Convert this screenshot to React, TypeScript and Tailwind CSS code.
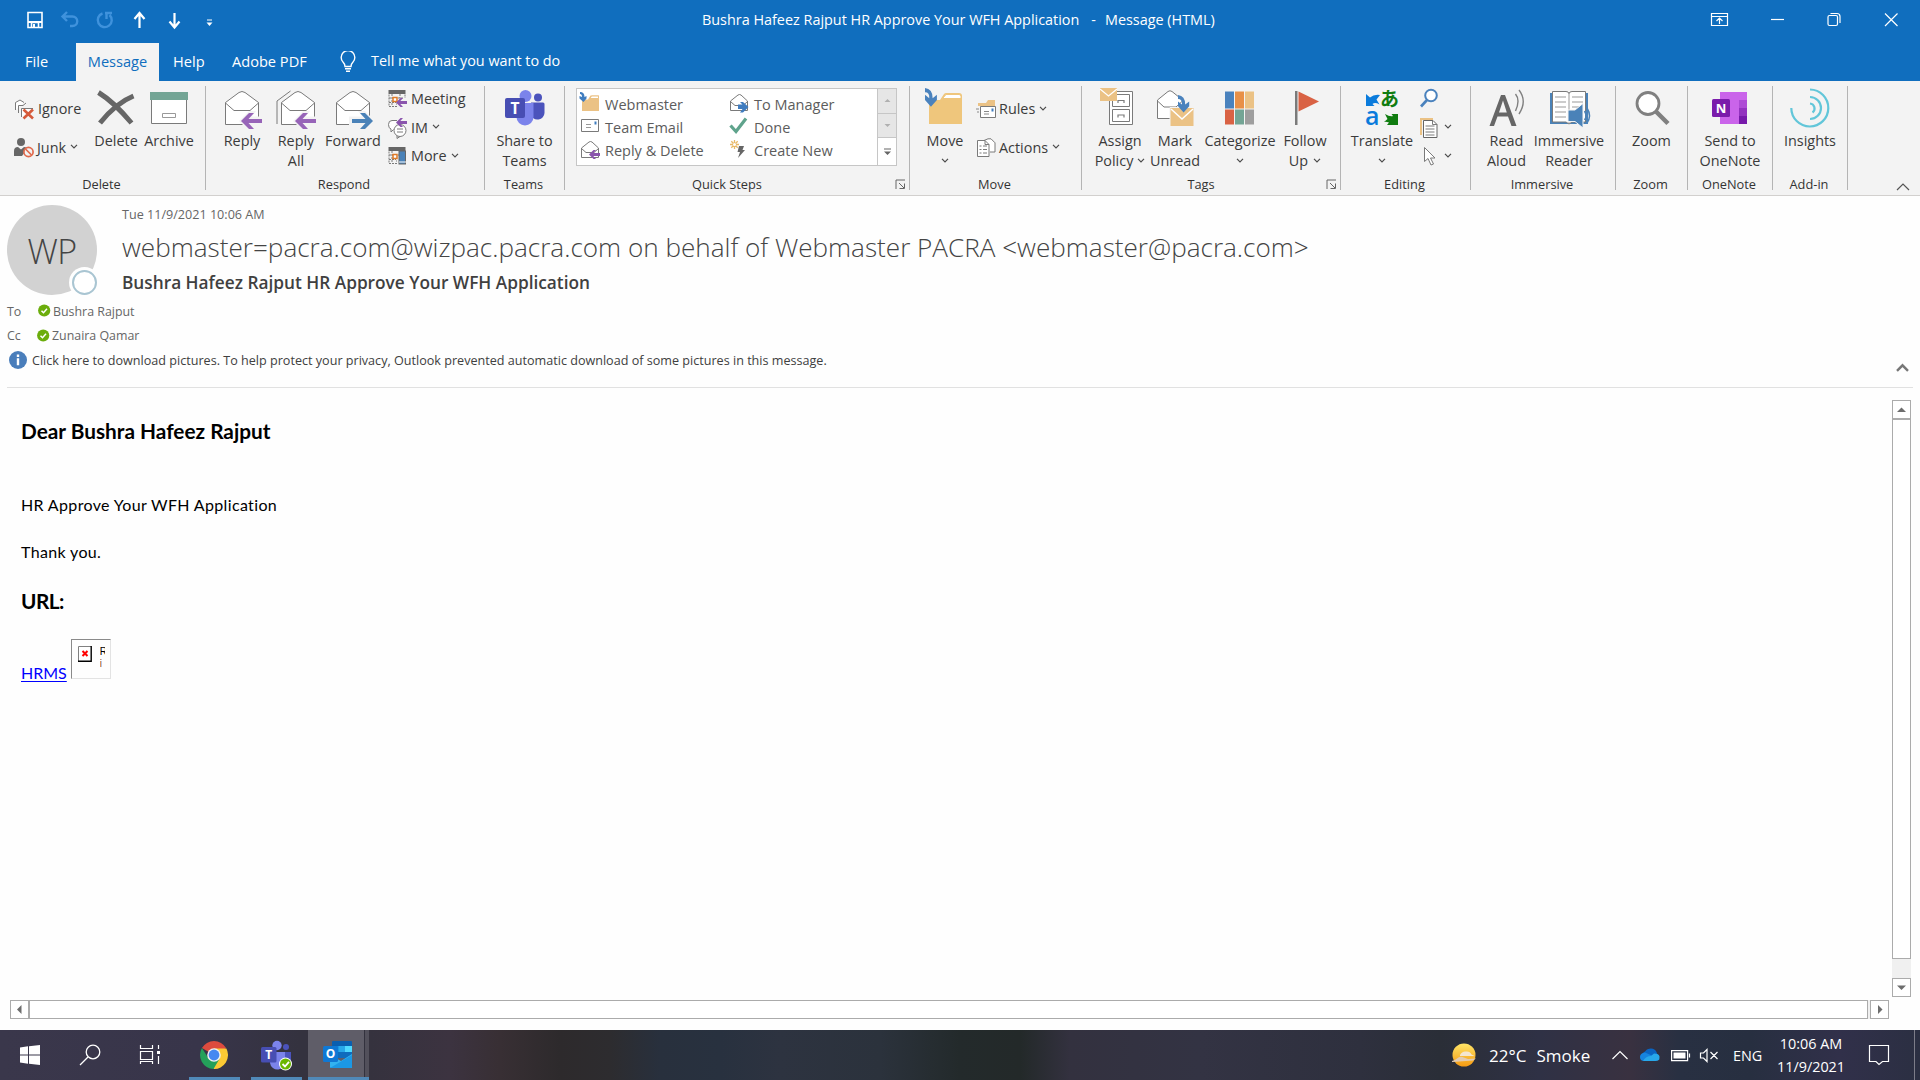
import type { ReactNode } from "react";

const G = "#7a7a7a";

/* ---------- shared pieces ---------- */

function Chevron({ className = "" }: { className?: string }) {
  return (
    <svg className={`-mt-[2px] inline-block shrink-0 ${className}`} width="8" height="5" viewBox="0 0 8 5" fill="none" stroke="#4a4a4a" strokeWidth="1.2">
      <path d="M1 0.8 4 3.8 7 0.8" />
    </svg>
  );
}

function Big({ w, icon, l1, l2 }: { w: string; icon: ReactNode; l1: ReactNode; l2?: ReactNode }) {
  return (
    <div className={`flex shrink-0 flex-col items-center pt-[7px] ${w}`}>
      <svg className="shrink-0 overflow-visible" width="40" height="43" viewBox="0 0 40 43" fill="none">
        {icon}
      </svg>
      <div className="whitespace-nowrap text-center text-[14.4px] leading-5">
        <div>{l1}</div>
        <div className="flex h-5 items-center justify-center">{l2}</div>
      </div>
    </div>
  );
}

function Small({ h, icon, text, chevron, gap = "gap-[5px]" }: { h: string; icon: ReactNode; text?: string; chevron?: boolean; gap?: string }) {
  return (
    <div className={`flex items-center whitespace-nowrap text-[14.4px] ${gap} ${h}`}>
      <svg className="shrink-0 overflow-visible" width="20" height="20" viewBox="0 0 20 20" fill="none">
        {icon}
      </svg>
      {text && <span>{text}</span>}
      {chevron && <Chevron className="ml-px" />}
    </div>
  );
}

function Group({ w, label, launcher, children }: { w: string; label: string; launcher?: boolean; children: ReactNode }) {
  return (
    <>
      <div className={`flex shrink-0 flex-col ${w}`}>
        <div className="flex h-[95px]">{children}</div>
        <div className="flex h-5 shrink-0 items-center">
          <span className={`flex-1 text-center text-[12.8px] text-[#333] ${launcher ? "pr-[6px]" : "pr-[2px]"}`}>{label}</span>
          {launcher && (
            <svg className="mb-[2px] mr-[3px] shrink-0" width="11" height="11" viewBox="0 0 11 11" fill="none" stroke="#666">
              <path d="M1 10V1h9M4 4l5 5M9.5 4.500V9.500H4.500" />
            </svg>
          )}
        </div>
      </div>
      <div className="my-[5px] w-px shrink-0 bg-[#b4b4b4]" />
    </>
  );
}

/* ---------- ribbon drawings ---------- */

const Envelope = () => (
  <>
    <path d="M3.500 14.500 17 4.500q3-2 6 0L36.500 14.500V36.500H3.500Z" fill="#fff" stroke={G} />
    <path d="M3.500 15 12 22.500H28L36.500 15" stroke={G} />
  </>
);

const LeftArrow = ({ x, y }: { x: number; y: number }) => (
  <g transform={`translate(${x} ${y})`}>
    <path d="M-2 8 8-2h7l-4 5.500h13v9H11l4 5.500H8Z" fill="#f3f3f3" />
    <path d="M0 8 8 0h5L7.500 6H21v4H7.500L13 16H8Z" fill="#9764b8" />
  </g>
);

const Calendar = () => (
  <>
    <path d="M.5 1h17v4H.5Z" fill="#666" />
    <path d="M1 5.500V17.500H9M17 5.500V9M4 5v12M8 15h1M12 5v4M1 9h14M1 13.500h7" stroke={G} strokeDasharray="2 1" />
    <path d="M5 8.500h4v4H5Z" fill="#fff" stroke="#e07b28" strokeWidth="1.500" />
  </>
);

const SmallLeftArrow = ({ x, y }: { x: number; y: number }) => (
  <path transform={`translate(${x} ${y})`} d="M0 4.500 4.500 0H7L4.300 3H11V6H4.300L7 9H4.500Z" fill="#8a55ad" />
);

const CurvedArrow = () => <path d="M0 0q9 1 9 12l5-4v6l-7 8-7-8V8l5 4Q5.500 5 0 5Z" fill="#4a82bd" />;

const Folder = () => (
  <>
    <path d="M5 13H16l4-6q1-1 2-1H35q3 0 3 3V37H5Z" fill="#efc67c" />
    <path d="M18.500 11.500 22 7.500H35q2 0 2 2v2Z" fill="#fff" stroke="#efc67c" />
  </>
);

const MiniEnvelope = () => (
  <path d="M1.500 8 9 2q1.500-1 3 0L18.500 8V17.500H1.500ZM1.500 8.500 6 12.500h8L18.500 8.500" fill="#fff" stroke={G} />
);

const TeamsLogo = () => (
  <>
    <circle cx="33" cy="9.500" r="4" fill="#4b53bc" />
    <path d="M26 14.500H38a1.500 1.500 0 0 1 1.500 1.500v9a7 7 0 0 1-13.500 2Z" fill="#4b53bc" />
    <circle cx="20.500" cy="8" r="6" fill="#7b83eb" />
    <path d="M12 15H28.500V29a8.500 8.500 0 0 1-17 0Z" fill="#7b83eb" />
    <rect x="0" y="10" width="20" height="20" rx="2" fill="#474eb3" />
    <text x="10" y="26" textAnchor="middle" fontFamily="Open Sans, sans-serif" fontWeight="700" fontSize="15.500" fill="#fff">T</text>
  </>
);

/* ---------- quick steps ---------- */

const quickSteps: { text: string; icon: ReactNode }[] = [
  {
    text: "Webmaster",
    icon: (
      <>
        <path d="M2 6.500H8l2.500-4H19V18H2Z" fill="#ebc285" />
        <path d="M10 5.500 11.500 3H18.500V5.500Z" fill="#fff" stroke="#ebc285" />
        <path d="M0-1q4.500 0 4.500 5l2-1v2.500L3.500 9-.5 5.500V3l2.500 1Q2 1 0 1Z" fill="#3f7cbf" />
      </>
    ),
  },
  {
    text: "To Manager",
    icon: (
      <>
        <MiniEnvelope />
        <path d="M9 11.500h4.500L11 9h3l5.500 5-5.500 5.500h-3L13.500 16H9Z" fill="#3f7cbf" />
      </>
    ),
  },
  {
    text: "Team Email",
    icon: (
      <>
        <path d="M1.500 3.500h17v12h-17Z" fill="#fff" stroke={G} />
        <path d="M6 8.500h5M6 11.500h5" stroke="#999" />
        <path d="M14.500 5.500h2v3h-2Z" fill="#3f7cbf" />
      </>
    ),
  },
  { text: "Done", icon: <path d="M1.500 9.500 7 15.500 17 2.500" stroke="#5fa38c" strokeWidth="3.200" /> },
  {
    text: "Reply & Delete",
    icon: (
      <>
        <MiniEnvelope />
        <SmallLeftArrow x={9} y={10} />
      </>
    ),
  },
  {
    text: "Create New",
    icon: (
      <>
        <path d="M5.500 0v9M1 4.500h9M2.300 1.300l6.400 6.400M8.700 1.300 2.300 7.700" stroke="#e8b968" strokeWidth="1.300" />
        <circle cx="5.500" cy="4.500" r="1.500" fill="#fff" />
        <path d="M10 6h5l-1.500 4H16L9 18l2-6H8.500Z" fill="#666" />
      </>
    ),
  },
];

function ScrollCell({ className, children }: { className: string; children: ReactNode }) {
  return (
    <div className={`flex items-center justify-center ${className}`}>
      <svg width="9" height="9" viewBox="0 0 9 9">
        {children}
      </svg>
    </div>
  );
}

/* ---------- sections ---------- */

function TitleBar() {
  return (
    <div className="flex h-[43px] items-center text-white">
      <div className="flex w-[640px] shrink-0 items-center pb-[3px]">
        <svg width="220" height="24" viewBox="0 0 220 24" fill="none" stroke="#fff">
          <path d="M28 4.500H42V19.500H28ZM31.500 19v-4.500h7V19" strokeWidth="1.600" />
          <path d="M28 13h14v2H28Z" fill="#fff" stroke="none" />
          <path d="M33 16h2v4h-2Z" fill="#fff" stroke="none" />
          <g stroke="#3f92dc" strokeWidth="2.400">
            <path d="M67 4l-4.500 4.500L67 13M63 8.500h9.500a4.700 4.700 0 0 1 0 9.500H70" />
            <path d="M102.500 5.500a7 7 0 1 0 7 1.500M105 5h7M106.500 5v6" />
          </g>
          <path d="M139.500 20V6M134.500 11l5-6 5 6" strokeWidth="2.200" />
          <path d="M174.500 5v14M169.500 13.500l5 6 5-6" strokeWidth="2.200" />
          <path d="M207 12h5" />
          <path d="M206.500 14.500h6l-3 3.500Z" fill="#fff" stroke="none" />
        </svg>
      </div>
      <div className="flex flex-1 whitespace-pre pb-[3px] pl-[62px] text-[14.4px]">
        <span>Bushra Hafeez Rajput HR Approve Your WFH Application</span>
        <span className="ml-[12px]">-</span>
        <span className="ml-[9px]">Message (HTML)</span>
      </div>
      <svg className="mb-[5px] shrink-0" width="210" height="20" viewBox="0 0 210 20" fill="none" stroke="#fff" strokeWidth="1.200">
        <path d="M1.500 4.500h16v12h-16ZM1.500 7.500h16M9.500 15V9.500M6.500 12l3-3 3 3" />
        <path d="M61 10.500h13" />
        <rect x="118" y="6.500" width="9.500" height="10" rx="1.500" />
        <path d="M120.500 4.500h6.500q3 0 3 3v6.500" />
        <path d="M175 4.500 187.500 17M187.500 4.500 175 17" />
      </svg>
    </div>
  );
}

function TabBar() {
  return (
    <div className="flex h-[38px] items-center text-[14.600px] leading-[22px] text-white">
      <div className="w-[76px] pb-[2px] pl-[25px]">File</div>
      <div className="flex h-full w-[83px] items-center justify-center bg-[#f3f3f3] pb-[2px] text-[#106ebe]">Message</div>
      <div className="w-[73px] pb-[2px] pl-[14px]">Help</div>
      <div className="w-[108px] whitespace-nowrap pb-[2px]">Adobe PDF</div>
      <svg className="shrink-0" width="16" height="22" viewBox="0 0 16 22" fill="none" stroke="#fff" strokeWidth="1.400">
        <path d="M5 15.500q0-2.500-2-4.500a6.800 6.800 0 1 1 10 0q-2 2-2 4.500ZM5 17.800h6M6 20.200h4" />
      </svg>
      <div className="ml-[15px] whitespace-nowrap pb-[2px] text-[14.400px]">Tell me what you want to do</div>
    </div>
  );
}

function Ribbon() {
  return (
    <div className="flex h-[115px] border-b border-[#d2d0ce] bg-[#f3f3f3] text-[#3b3b3b]">
      <Group w="w-[205px]" label="Delete">
        <div className="ml-[14px] w-[76px] pt-[9px]">
          <Small
            h="h-[38.500px]"
            gap="gap-[4px]"
            icon={
              <>
                <path d="M1.500 11V3.500L6 1l4 2.500" stroke={G} fill="#fff" />
                <path d="M4.500 14V6.500H9l3-2.500" stroke={G} />
                <path d="M7.500 18V9.500H19" stroke={G} fill="#fff" />
                <path d="M9.500 10.500 19 19.500M19 10.500 9.500 19.500" stroke="#d65a3a" strokeWidth="2.600" />
              </>
            }
            text="Ignore"
          />
          <Small
            h="h-[38.500px]"
            icon={
              <>
                <circle cx="7" cy="4" r="4" fill="#666" />
                <path d="M0 18v-5q0-4 4-4l3 2.500L10 9q3 0 3 2l-5 7Z" fill="#666" />
                <circle cx="14.500" cy="14" r="4.600" stroke="#e0694c" strokeWidth="1.700" fill="#f3f3f3" />
                <path d="M11.500 11l6 6" stroke="#e0694c" strokeWidth="1.700" />
              </>
            }
            text="Junk"
            chevron
            gap="gap-[3px]"
          />
        </div>
        <Big w="w-[52px]" icon={<path d="M2.500 4.500Q18 14 35.500 35M37.500 8Q20 15 4 35" stroke="#666" strokeWidth="5" />} l1="Delete" />
        <Big
          w="w-[54px]"
          icon={
            <>
              <path d="M2.500 8V35.500H37.500V8" fill="#fff" stroke={G} />
              <path d="M1 4h38v8H1Z" fill="#73a595" />
              <path d="M13.500 25.500h13v4h-13Z" stroke="#999" />
            </>
          }
          l1="Archive"
        />
      </Group>

      <Group w="w-[278px]" label="Respond">
        <Big w="ml-[9px] w-[54px]" icon={<><Envelope /><LeftArrow x={19} y={25} /></>} l1="Reply" />
        <Big
          w="w-[54px]"
          icon={
            <>
              <path d="M1 36V13L14.500 3" stroke={G} />
              <g transform="translate(2 0)">
                <Envelope />
              </g>
              <LeftArrow x={19} y={25} />
            </>
          }
          l1="Reply"
          l2="All"
        />
        <Big
          w="w-[60px]"
          icon={
            <>
              <Envelope />
              <g transform="translate(40 25) scale(-1 1)">
                <path d="M-2 8 8-2h7l-4 5.500h13v9H11l4 5.500H8Z" fill="#f3f3f3" />
                <path d="M0 8 8 0h5L7.500 6H21v4H7.500L13 16H8Z" fill="#4a82b8" />
              </g>
            </>
          }
          l1="Forward"
        />
        <div className="ml-[5px] pt-[4px]">
          <Small h="h-[28.500px]" gap="gap-[3px]" icon={<><Calendar /><SmallLeftArrow x={8} y={9} /></>} text="Meeting" />
          <Small
            h="h-[28.500px]"
            gap="gap-[3px]"
            icon={
              <>
                <path d="M9 2.500H4q-3.500 0-3.500 4T3 11v3l2.500-2.500" stroke={G} fill="#fff" />
                <circle cx="12" cy="12.500" r="6" stroke={G} fill="#fff" />
                <path d="M9 11h6M9 14h6M9 17.500v3L12 18.500" stroke={G} />
                <SmallLeftArrow x={8} y={0} />
              </>
            }
            text="IM"
            chevron
          />
          <Small
            h="h-[28.500px]"
            gap="gap-[3px]"
            icon={
              <>
                <Calendar />
                <rect x="11" y="5" width="6.500" height="13" fill="#4a82b8" stroke="#666" />
                <path d="M11 16h7" stroke="#fff" />
              </>
            }
            text="More"
            chevron
          />
        </div>
      </Group>

      <Group w="w-[79px]" label="Teams">
        <Big w="w-full" icon={<TeamsLogo />} l1="Share to" l2="Teams" />
      </Group>

      <Group w="w-[344px]" label="Quick Steps" launcher>
        <div className="ml-[11px] mt-[7px] flex h-[78px] w-[321px] border border-[#c6c6c6] bg-white">
          <div className="grid flex-1 grid-cols-[149px_1fr] grid-rows-3 pb-[2px] pl-[3px] pt-[4px]">
            {quickSteps.map((q) => (
              <div key={q.text} className="flex items-center gap-[5px] whitespace-nowrap text-[14.5px] text-[#5c5c5c]">
                <svg className="-mt-[3px] shrink-0 overflow-visible" width="20" height="20" viewBox="0 0 20 20" fill="none">
                  {q.icon}
                </svg>
                {q.text}
              </div>
            ))}
          </div>
          <div className="grid w-[19px] grid-rows-[1fr_1fr_1.1fr] border-l border-[#c6c6c6]">
            <ScrollCell className="border-b border-[#c6c6c6] bg-[#e6e6e6]">
              <path d="M1.500 6h6l-3-3Z" fill="#b0b0b0" />
            </ScrollCell>
            <ScrollCell className="border-b border-[#c6c6c6] bg-[#e6e6e6]">
              <path d="M1.500 3h6l-3 3Z" fill="#b0b0b0" />
            </ScrollCell>
            <ScrollCell className="bg-white">
              <path d="M1 1.500h7v1H1ZM1 4.500h7L4.500 8Z" fill="#666" />
            </ScrollCell>
          </div>
        </div>
      </Group>

      <Group w="w-[171px]" label="Move">
        <Big
          w="ml-1 w-[62px]"
          icon={
            <>
              <g transform="translate(-1 -1)">
                <Folder />
              </g>
              <g transform="scale(.85)">
                <CurvedArrow />
              </g>
            </>
          }
          l1="Move"
          l2={<Chevron />}
        />
        <div className="pt-[9px]">
          <Small
            h="h-[38.500px]"
            gap="gap-[3px]"
            icon={
              <>
                <path d="M2 8V4h8l2-3h7v6H2" fill="#ebc285" />
                <path d="M4.500 7.500h15v11h-15Z" fill="#fff" stroke={G} />
                <path d="M8 12.500h5M8 15h5M0 10h3M1 13h2" stroke="#888" />
                <path d="M15.500 9.500h2v3h-2Z" fill="#3f7cbf" />
              </>
            }
            text="Rules"
            chevron
          />
          <Small
            h="h-[38.500px]"
            gap="gap-[3px]"
            icon={
              <>
                <path d="M8 2.500 12 .8h3l4 4V14h-5" fill="#fff" stroke={G} />
                <path d="M1.500 2.500H9l4 4V18.500H1.500Z" fill="#fff" stroke={G} />
                <path d="M9 2.500v4h4M3.500 8h2M7 8h4M3.500 11.500h2M7 11.500h4M3.500 15h2M7 15h4" stroke={G} />
              </>
            }
            text="Actions"
            chevron
          />
        </div>
      </Group>

      <Group w="w-[258px]" label="Tags" launcher>
        <Big
          w="ml-[11px] w-[54px]"
          icon={
            <>
              <path d="M9.500 3.500h23v33h-23Z" fill="#fff" stroke={G} />
              <path d="M12.500 6.500h17v12h-17ZM12.500 21.500h17v12h-17Z" stroke={G} />
              <path d="M18 15v-2.500h6V15M18 29.500V27h6v2.500" stroke={G} strokeWidth="1.200" />
              <path d="M0 0h17v13H0Z" fill="#ebc285" />
              <path d="M0 1 8.500 8 17 1" stroke="#fff" strokeWidth="1.200" />
            </>
          }
          l1="Assign"
          l2={<>Policy<Chevron className="ml-[4px]" /></>}
        />
        <Big
          w="w-[56px]"
          icon={
            <>
              <path d="M2.500 12 13 3.500q2-1.500 4 0L27.500 12V30.500H2.500Z" fill="#fff" stroke={G} />
              <path d="M2.500 13 9 19h12l6.500-6" stroke={G} />
              <path d="M15 19.500h24v19H15Z" fill="#ebc285" stroke="#f3f3f3" />
              <path d="M16 21 27 31 38 21" stroke="#fff" strokeWidth="1.500" />
              <g transform="translate(23 7) scale(.8)">
                <CurvedArrow />
              </g>
            </>
          }
          l1="Mark"
          l2="Unread"
        />
        <Big
          w="w-[74px]"
          icon={
            <>
              <path d="M5 3.500h9v17H5Z" fill="#4a82bd" />
              <path d="M15 3.500h9v17H15Z" fill="#e89047" />
              <path d="M25 3.500h9v17H25Z" fill="#ebc285" />
              <path d="M5 21.500h9v15H5Z" fill="#d96244" />
              <path d="M15 21.500h9v15H15Z" fill="#73a595" />
              <path d="M25 21.500h9v15H25Z" fill="#9e9e9e" />
            </>
          }
          l1="Categorize"
          l2={<Chevron />}
        />
        <Big
          w="w-[56px]"
          icon={
            <>
              <path d="M10 3h2.500v34H10Z" fill={G} />
              <path d="M13.500 3.500 34 13.500l-20.500 10Z" fill="#d96244" />
            </>
          }
          l1="Follow"
          l2={<>Up<Chevron className="ml-[5px]" /></>}
        />
      </Group>

      <Group w="w-[129px]" label="Editing">
        <Big
          w="ml-[9px] w-[64px]"
          icon={
            <>
              <path d="M4 6l4 3.500Q12 6 18 7l-3.500 4.500 3 5Q13 14 10.500 16l2 2H4Z" fill="#0a7bdc" />
              <text x="18" y="18" fontFamily="Noto Sans CJK JP, sans-serif" fontWeight="700" fontSize="19" fill="#107c10">あ</text>
              <text x="3" y="37" fontFamily="Open Sans, sans-serif" fontWeight="600" fontSize="25" fill="#0a7bdc">a</text>
              <path d="M36 26v11h-11l2-2.500q-3-1-5-.5l3.500-3-2.500-5q5 3 8 2l-1.500-2Z" fill="#107c10" />
            </>
          }
          l1="Translate"
          l2={<Chevron />}
        />
        <div className="ml-[6px] pt-[4px]">
          <Small
            h="h-[28.500px]"
            icon={
              <>
                <circle cx="11" cy="6.500" r="5.800" fill="#fff" stroke="#4a82bd" strokeWidth="2" />
                <path d="M7 11 1 17.500" stroke="#4a82bd" strokeWidth="2.600" />
              </>
            }
          />
          <Small
            h="h-[28.500px]"
            gap="gap-[3px]"
            icon={
              <>
                <path d="M1 17V1h12" stroke="#ebc285" strokeWidth="2" />
                <path d="M3.500 2.500H13l4 4V19.500H3.500Z" fill="#fff" stroke="#666" />
                <path d="M12.500 2.500v4H17M5.500 8h9M5.500 11h9M5.500 14h9M5.500 17h9" stroke={G} />
              </>
            }
            chevron
          />
          <Small
            h="h-[28.500px]"
            gap="gap-[3px]"
            icon={<path d="M4.500 1.500v14l3.500-3 3 6.500 2.500-1-3-6H15Z" fill="#fff" stroke={G} />}
            chevron
          />
        </div>
      </Group>

      <Group w="w-[144px]" label="Immersive">
        <Big
          w="ml-[9px] w-[53px]"
          icon={
            <>
              <path d="M2.500 38 14 7h4l11.500 31h-5L21 28.500H10.500L7 38ZM12 24.500h7.800L16 12.500Z" fill="#666" fillRule="evenodd" />
              <path d="M28.500 6q5 6 0 17M32 2q8.500 11 0 24" stroke="#808080" strokeWidth="1.400" />
            </>
          }
          l1="Read"
          l2="Aloud"
        />
        <Big
          w="w-[72px]"
          icon={
            <>
              <path d="M1 5h38v31H1Z" fill="#4a82b8" />
              <path d="M3.500 3.500H17q2.500 0 3 2 .5-2 3-2H36.500V34H23l-3 2-3-2H3.500Z" fill="#fff" stroke={G} />
              <path d="M20 5v30M6 9h11M6 14h11M6 19h11M6 24h11M6 29h11M23 9h11M23 14h11M23 19h9" stroke="#999" />
              <path d="M19 22h7l8-6.500V40l-8-6.500h-7Z" fill="#4a82b8" stroke="#f3f3f3" />
              <path d="M35.500 23q3 5 0 9M38 20q5 8 0 15" stroke="#4a82b8" strokeWidth="1.500" />
            </>
          }
          l1="Immersive"
          l2="Reader"
        />
      </Group>

      <Group w="w-[71px]" label="Zoom">
        <Big
          w="w-full"
          icon={
            <>
              <circle cx="16" cy="15.500" r="11" fill="#fff" stroke="#808080" strokeWidth="2.800" />
              <path d="M24 23.500 36 35.500" stroke="#808080" strokeWidth="4.500" />
            </>
          }
          l1="Zoom"
        />
      </Group>

      <Group w="w-[84px]" label="OneNote">
        <Big
          w="w-full"
          icon={
            <>
              <path d="M10 4H37V36H10Z" fill="#ca64ea" />
              <path d="M29 12h8v8h-8Z" fill="#ae4bd5" />
              <path d="M29 20h8v8h-8Z" fill="#9332bf" />
              <path d="M29 28h8v8h-8Z" fill="#7719aa" />
              <rect x="2" y="11" width="18" height="18" rx="1.500" fill="#7a1cab" />
              <text x="11" y="25" textAnchor="middle" fontFamily="Open Sans, sans-serif" fontWeight="700" fontSize="13" fill="#fff">N</text>
            </>
          }
          l1="Send to"
          l2="OneNote"
        />
      </Group>

      <Group w="w-[74px]" label="Add-in">
        <Big
          w="w-full"
          icon={<path d="M20 1.500a18.500 18.500 0 1 1-18.700 18.500M20 9a11 11 0 1 1 0 22M20 15.500a5 5 0 0 1 2.500 9" stroke="#62c6d9" strokeWidth="2.200" />}
          l1="Insights"
        />
      </Group>

      <div className="flex flex-1 items-end justify-end pb-1 pr-[10px]">
        <svg width="14" height="8" viewBox="0 0 14 8" fill="none" stroke="#555" strokeWidth="1.200">
          <path d="M1 7 7 1l6 6" />
        </svg>
      </div>
    </div>
  );
}

function Presence() {
  return (
    <svg className="mb-[3px] shrink-0" width="13" height="13" viewBox="0 0 13 13" fill="none">
      <circle cx="6.200" cy="6.500" r="6.100" fill="#6bad0c" />
      <path d="M3.500 6.700 5.500 8.700 9 4.800" stroke="#fff" strokeWidth="1.500" />
    </svg>
  );
}

function MessageHeader() {
  return (
    <div className="h-[192px] px-[7px] pt-[9px] text-[12.600px]">
      <div className="h-full border-b border-[#e1e1e1]">
        <div className="flex h-[95px]">
          <div className="relative flex size-[90px] items-center justify-center rounded-full bg-[#d2d2d2] text-[34px] font-light text-[#444]">
            <span className="mt-[3px] tracking-[-0.500px]">WP</span>
            <span className="absolute -bottom-[3px] -right-[3px] size-[31px] rounded-full bg-[#fefefe] p-[3px]">
              <span className="block size-full rounded-full border-2 border-[#a9c5d2] bg-white" />
            </span>
          </div>
          <div className="ml-[25px] whitespace-nowrap">
            <div className="h-[24px] leading-[19px] text-[#666]">Tue 11/9/2021 10:06 AM</div>
            <div className="h-[42px] text-[26.100px] font-light leading-9 text-[#444]">
              webmaster=pacra.com@wizpac.pacra.com on behalf of Webmaster PACRA &lt;webmaster@pacra.com&gt;
            </div>
            <div className="text-[17.250px] font-semibold leading-6 text-[#404040]">Bushra Hafeez Rajput HR Approve Your WFH Application</div>
          </div>
        </div>
        <div className="flex h-6 items-center text-[12.400px] text-[#666]">
          <span className="w-[31px]">To</span>
          <Presence />
          <span className="ml-[2px]">Bushra Rajput</span>
        </div>
        <div className="flex h-[25px] items-center text-[12.400px] text-[#666]">
          <span className="w-[30px]">Cc</span>
          <Presence />
          <span className="ml-[2px]">Zunaira Qamar</span>
        </div>
        <div className="flex h-6 items-center text-[#404040]">
          <svg className="mb-[2px] ml-[2px] shrink-0" width="18" height="18" viewBox="0 0 18 18">
            <circle cx="9" cy="9" r="9" fill="#4a7ebb" />
            <path d="M7.800 3.500h2.400v2.400H7.800ZM7.800 7.300h2.400v7H7.800Z" fill="#fff" />
          </svg>
          <span className="ml-[5px] whitespace-nowrap">
            Click here to download pictures. To help protect your privacy, Outlook prevented automatic download of some pictures in this message.
          </span>
          <svg className="ml-auto mr-1 mt-[12px] shrink-0" width="13" height="9" viewBox="0 0 13 9" fill="none" stroke="#777" strokeWidth="2.400">
            <path d="M1 7.800 6.500 2.300 12 7.800" />
          </svg>
        </div>
      </div>
    </div>
  );
}

function Arrow({ d }: { d: string }) {
  return (
    <svg width="9" height="9" viewBox="0 0 9 9" fill="#6d6d6d">
      <path d={d} />
    </svg>
  );
}

function MessageBody() {
  return (
    <div className="flex h-[612px]">
      <div className="flex-1 pl-[21px] pt-[28px] font-[Lato,sans-serif] text-[16px] text-black">
        <h2 className="h-[75px] text-[20.800px] font-bold leading-[30px]">Dear Bushra Hafeez Rajput</h2>
        <p className="h-[47px] leading-[28px] tracking-[0.350px]">HR Approve Your WFH Application</p>
        <p className="h-[47px] leading-[28px] tracking-[0.350px]">Thank you.</p>
        <h2 className="h-[54px] text-[20.800px] font-bold leading-[32px] tracking-[-0.500px]">URL:</h2>
        <div className="flex">
          <span className="mt-[20px] leading-[28px] text-[#0000ff] underline underline-offset-2">HRMS</span>
          <div className="ml-[4px] flex size-10 gap-2 border border-b-[#e3e3e3] border-l-[#8a8a8a] border-r-[#e3e3e3] border-t-[#8a8a8a] pl-[6px] pt-[6px]">
            <svg className="shrink-0" width="14" height="16" viewBox="0 0 14 16" fill="none">
              <path d="M.5 15V.5H13" stroke="#808080" />
              <path d="M0 15.200h13.200V0" stroke="#000" strokeWidth="1.400" />
              <path d="M4.500 5 9.500 10M9.500 5 4.500 10" stroke="#f00" strokeWidth="2" />
            </svg>
            <div className="w-[5px] overflow-hidden font-['Liberation_Sans',sans-serif] text-[10px] leading-3">
              <div>R</div>
              <div className="text-[#8a4a2a]">i</div>
            </div>
          </div>
        </div>
      </div>
      <div className="mr-[9px] mt-3 flex h-[597px] w-[19px] flex-col bg-[#f0f0f0]">
        <div className="flex h-[19px] items-center justify-center border border-[#ababab] bg-white">
          <Arrow d="M0 7h9L4.500 2.500Z" />
        </div>
        <div className="h-[540px] border border-[#ababab] bg-white" />
        <div className="mt-auto flex h-[19px] items-center justify-center border border-[#ababab] bg-white">
          <Arrow d="M0 2.500h9L4.500 7Z" />
        </div>
      </div>
    </div>
  );
}

function HorizontalScroll() {
  return (
    <div className="flex h-[30px] items-start pl-[10px]">
      <div className="flex h-[19px] w-[1879px]">
        <div className="flex w-[19px] items-center justify-center border border-[#ababab] bg-white">
          <Arrow d="M6.500 0v9L2 4.500Z" />
        </div>
        <div className="flex-1 border border-[#ababab] bg-white" />
        <div className="w-[2px] bg-[#f0f0f0]" />
        <div className="flex w-[19px] items-center justify-center border border-[#ababab] bg-white">
          <Arrow d="M3 0v9L7.500 4.500Z" />
        </div>
      </div>
    </div>
  );
}

function Taskbar() {
  return (
    <div className="flex h-[50px] items-center bg-[linear-gradient(90deg,#3a374b_0px,#38354a_200px,#34323f_300px,#35323e_370px,#3c3340_450px,#382f34_500px,#2d2a2c_560px,#2d2c2f_610px,#28303d_660px,#28313f_720px,#2d3340_780px,#2b323c_880px,#232a2b_960px,#232929_1020px,#33313f_1070px,#333343_1200px,#2e303e_1360px,#2a2e37_1440px,#2f3145_1540px,#393140_1630px,#283042_1680px,#272f40_1750px,#31304a_1840px,#2b2f42_1920px)] text-white">
      <svg className="shrink-0" width="189" height="50" viewBox="0 0 189 50" fill="none" stroke="#fff">
        <path d="M20 17.500 28 16.300V24.500H20ZM29 16.200 40 15V24.500H29ZM20 25.500H28V33.700L20 32.500ZM29 25.500H40V35L29 33.800Z" fill="#fff" stroke="none" />
        <circle cx="93" cy="22" r="6.800" strokeWidth="1.300" />
        <path d="M88 27 80 35" strokeWidth="1.300" />
        <path d="M140.500 15v3.500h12V15M140.500 21.500h12v8h-12ZM140.500 34v-2.500h12V34M158.500 15v4M158.500 26v8" strokeWidth="1.200" />
        <path d="M157 21h3v3h-3Z" fill="#fff" stroke="none" />
      </svg>
      <div className="flex h-full w-[51px] flex-col items-center border-b-[3px] border-[#5089b8] pt-[11px]">
        <svg className="mr-px shrink-0" width="28" height="28" viewBox="0 0 28 28">
          <path d="M14 14 1.900 7A14 14 0 0 1 26.100 7Z" fill="#dd4b3e" />
          <path d="M14 14V7.500H26.400A14 14 0 0 1 13.500 28Z" fill="#fcc934" />
          <path d="M14 14 8 16.500 1.900 7A14 14 0 0 0 13.500 28L20 17Z" fill="#24a05a" />
          <circle cx="14" cy="14" r="6.800" fill="#f1f1f1" />
          <circle cx="14" cy="14" r="5.400" fill="#4688f1" />
        </svg>
      </div>
      <div className="ml-[11px] flex h-full w-[51px] flex-col items-center border-b-[3px] border-[#5089b8] pt-[9px]">
        <svg className="shrink-0 overflow-visible" width="31" height="32" viewBox="0 0 31 32">
          <circle cx="25" cy="8" r="3" fill="#4b53bc" />
          <path d="M19 13h11v8q-3 8-11 5Z" fill="#4b53bc" />
          <circle cx="16" cy="6.500" r="4.700" fill="#7b83eb" />
          <path d="M9 13H24v9a7.500 7.500 0 0 1-15 2Z" fill="#7b83eb" />
          <rect x="0" y="8" width="15.500" height="15.500" rx="1.500" fill="#474eb3" />
          <text x="7.700" y="20" textAnchor="middle" fontFamily="Open Sans, sans-serif" fontWeight="700" fontSize="12" fill="#fff">T</text>
          <circle cx="24.500" cy="25" r="6.500" fill="#fff" />
          <circle cx="24.500" cy="25" r="5.500" fill="#6bb700" />
          <path d="M21.500 25 24 27.500 28 22.800" stroke="#fff" strokeWidth="1.800" fill="none" />
        </svg>
      </div>
      <div className="ml-[6px] flex h-full w-[61px] border-b-[3px] border-[#5089b8] bg-[#5f5d68]">
        <div className="flex w-[57px] justify-center border-r border-[#33323e] pl-[3px] pt-[10px]">
          <svg className="shrink-0" width="30" height="30" viewBox="0 0 30 30">
            <path d="M9 2q0-1 1-1H28q1 0 1 1V16H9Z" fill="#0a5fb0" />
            <path d="M9 6h13v10H9Z" fill="#1281d8" />
            <path d="M22 6h7v6h-7Z" fill="#50d9ff" />
            <path d="M15.500 6h6.500v6h-6.500Z" fill="#28a8ea" />
            <path d="M15 12h14v6H15Z" fill="#0f6cbd" />
            <path d="M7 15 18 21 29 14V27q0 1-1 1H8q-1 0-1-1Z" fill="#32b2f0" />
            <path d="M7 28 29 15V27q0 1-1 1Z" fill="#1c98e4" />
            <rect x="0" y="6" width="15" height="16" rx="1.500" fill="#0f78d4" />
            <text x="7.500" y="18.300" textAnchor="middle" fontFamily="Open Sans, sans-serif" fontWeight="700" fontSize="12" fill="#fff">O</text>
          </svg>
        </div>
        <div className="flex-1 bg-[#52505b]" />
      </div>

      <svg className="ml-auto shrink-0" width="28" height="28" viewBox="0 0 28 28">
        <defs>
          <linearGradient id="sun" x1="0" y1="0" x2="0" y2="1">
            <stop offset="0" stopColor="#ffe567" />
            <stop offset="1" stopColor="#f59a12" />
          </linearGradient>
        </defs>
        <circle cx="14" cy="14" r="11.500" fill="url(#sun)" />
        <path d="M10 14q2-4 6-3.500 4-.5 5.500 3l3 1.500H10Z" fill="#f4e6d0" />
        <path d="M2 20q3-1 5-2.500 3-3 7-1l4 1.500 8-.500-3 2-21 1.500Z" fill="#e2cbb2" />
      </svg>
      <div className="ml-[11px] flex w-[122px] items-center gap-[10px] whitespace-nowrap pt-px text-[17px] font-normal">
        <span>22°C</span>
        <span>Smoke</span>
      </div>
      <svg className="shrink-0" width="122" height="30" viewBox="0 0 122 30" fill="none" stroke="#fff" strokeWidth="1.200">
        <path d="M1.500 19 9 11.500l7.500 7.500" />
        <g stroke="none">
          <path d="M34 20a5 5 0 0 1 .5-9 6.500 6.500 0 0 1 11 1l3 8Z" fill="#0a64c2" />
          <path d="M29 17q0-4 5-4.500l9 4-6 4.500h-4q-4 0-4-4Z" fill="#1684df" />
          <path d="M32 21q3-5 8-5l3-2.500q5 0 5.500 3 .5 4.500-4 4.500Z" fill="#28a8ea" />
        </g>
        <path d="M60.600 10.600h16v10h-16ZM78.500 13.500v4" />
        <path d="M62.500 12.500h12v6h-12Z" fill="#fff" stroke="none" />
        <path d="M89.500 13h3l3.500-3.500v12L92.500 18h-3ZM99.500 12l7 7M106.500 12l-7 7" />
      </svg>
      <div className="w-[33px] pt-px text-[14.400px]">ENG</div>
      <div className="ml-[6px] w-[78px] whitespace-nowrap text-center text-[14.400px] leading-[23px]">
        <div>10:06 AM</div>
        <div>11/9/2021</div>
      </div>
      <svg className="ml-[18px] mr-[24px] shrink-0" width="22" height="22" viewBox="0 0 22 22" fill="none" stroke="#fff" strokeWidth="1.200">
        <path d="M1.500 1.500h19v16h-6L11 20.500 8 17.500H1.500Z" />
      </svg>
      <div className="mr-[5px] h-full w-px shrink-0 bg-[#7c7c88]" />
    </div>
  );
}

export default function App() {
  return (
    <div className="h-[1080px] w-[1920px] overflow-hidden bg-[#fefefe] font-['Open_Sans',sans-serif]">
      <div className="bg-[#106ebe]">
        <TitleBar />
        <TabBar />
      </div>
      <Ribbon />
      <MessageHeader />
      <MessageBody />
      <HorizontalScroll />
      <Taskbar />
    </div>
  );
}
